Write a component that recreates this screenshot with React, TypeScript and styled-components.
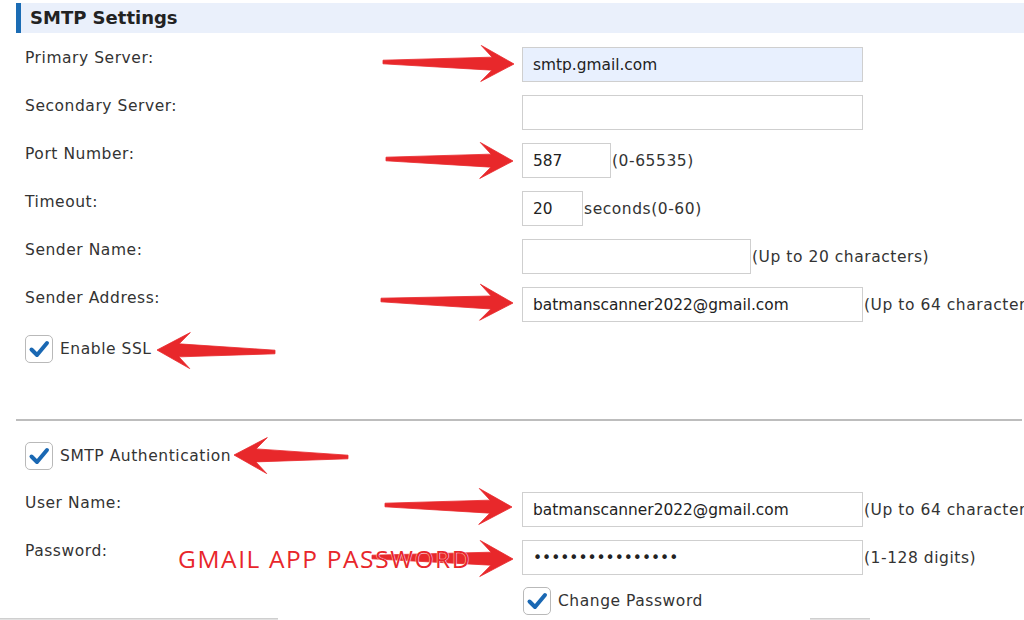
import React from "react";
import styled, { createGlobalStyle } from "styled-components";

const Global = createGlobalStyle`
  html, body { margin: 0; padding: 0; background: #ffffff; }
  body { font-family: "DejaVu Sans", Verdana, sans-serif; color: #333; }
`;

const Page = styled.div`
  position: relative;
  width: 1024px;
  height: 620px;
  overflow: hidden;
  padding-top: 3px;
  box-sizing: border-box;
`;

const SectionHeader = styled.h2`
  margin: 0 0 0 16px;
  height: 30px;
  line-height: 30px;
  padding-left: 9px;
  border-left: 5px solid #1b6cb4;
  background: #eaf0fb;
  font-size: 18px;
  font-weight: bold;
  color: #222;
`;

const Form = styled.div<{ $top: number }>`
  display: flex;
  flex-direction: column;
  gap: 13px;
  margin-top: ${(p) => p.$top}px;
  padding-left: 25px;
`;

const Row = styled.div<{ $shift?: number }>`
  display: flex;
  align-items: flex-start;
  white-space: nowrap;
  margin-top: ${(p) => p.$shift ?? 0}px;
`;

const Label = styled.div`
  width: 497px;
  flex: none;
  padding-top: 2px;
  font-size: 15.5px;
  letter-spacing: 0.55px;
  line-height: 18px;
  color: #333;
`;

const Field = styled.div`
  display: flex;
  align-items: center;
  height: 35px;
`;

const TextInput = styled.input<{ $w: number; $filled?: boolean }>`
  box-sizing: border-box;
  width: ${(p) => p.$w}px;
  height: 35px;
  margin: 0;
  padding: 0 10px;
  border: 1px solid #cfcfcf;
  border-radius: 0;
  background: ${(p) => (p.$filled ? "#e8f0fe" : "#ffffff")};
  font-family: "DejaVu Sans", Verdana, sans-serif;
  font-size: 15.4px;
  color: #222;
  outline: none;
`;

const Hint = styled.span`
  margin-left: 1px;
  font-size: 15.5px;
  letter-spacing: 0.55px;
  color: #333;
`;

const CheckRow = styled.label<{ $indent?: number; $shift?: number }>`
  display: flex;
  align-items: center;
  gap: 7px;
  margin-left: ${(p) => p.$indent ?? 0}px;
  margin-top: ${(p) => p.$shift ?? 0}px;
  font-size: 15.5px;
  letter-spacing: 0.55px;
  color: #333;
  white-space: nowrap;
`;

const Box = styled.span`
  box-sizing: border-box;
  width: 28px;
  height: 28px;
  border: 1.5px solid #b9b9b9;
  border-radius: 5px;
  background: #fff;
  display: flex;
  align-items: center;
  justify-content: center;
`;

const Divider = styled.hr`
  margin: 56px 2px 0 16px;
  border: none;
  border-top: 2px solid #bdbdbd;
  height: 0;
`;

const Footer = styled.div`
  display: flex;
  margin-top: 3px;
`;

const FooterBar = styled.div<{ $w: number; $ml: number }>`
  width: ${(p) => p.$w}px;
  margin-left: ${(p) => p.$ml}px;
  height: 4px;
  background: #e1e1e1;
  border-top: 1px solid #cfcfcf;
`;

const Overlay = styled.svg`
  position: absolute;
  left: 0;
  top: 0;
  pointer-events: none;
`;

const Annotation = styled.span`
  position: absolute;
  left: 178px;
  top: 544px;
  font-family: "Open Sans", "Liberation Sans", sans-serif;
  font-size: 24.5px;
  line-height: 30px;
  color: #e8262b;
  letter-spacing: 1.6px;
  text-shadow: 0 0 1px #fff, 0 0 1px #fff;
  white-space: nowrap;
`;

const Check = () => (
  <Box>
    <svg width="22" height="22" viewBox="0 0 22 22">
      <path
        d="M3.5 11.5 L9 17 L19 5"
        fill="none"
        stroke="#1a68b3"
        strokeWidth="4"
        strokeLinecap="round"
        strokeLinejoin="round"
      />
    </svg>
  </Box>
);

type ArrowDef = { x1: number; y1: number; x2: number; y2: number };

const arrows: ArrowDef[] = [
  { x1: 383, y1: 62, x2: 514, y2: 64 },
  { x1: 386, y1: 159, x2: 513, y2: 161 },
  { x1: 381, y1: 300, x2: 513, y2: 303 },
  { x1: 275, y1: 352, x2: 157, y2: 350 },
  { x1: 348, y1: 457, x2: 234, y2: 455 },
  { x1: 385, y1: 505, x2: 512, y2: 507 },
  { x1: 372, y1: 557, x2: 513, y2: 559 },
];

const Arrow = ({ x1, y1, x2, y2 }: ArrowDef) => {
  const L = Math.hypot(x2 - x1, y2 - y1);
  const a = (Math.atan2(y2 - y1, x2 - x1) * 180) / Math.PI;
  const d = `M0,-1.8 L${L - 22},-6.5 L${L - 33},-18 L${L},0 L${L - 33},18 L${L - 22},6.5 L0,1.8 Z`;
  return (
    <path
      d={d}
      fill="#e8282b"
      stroke="#e8282b"
      strokeWidth="0.8"
      strokeLinejoin="round"
      transform={`translate(${x1} ${y1}) rotate(${a})`}
    />
  );
};

export default function App() {
  return (
    <>
      <Global />
      <Page>
        <SectionHeader>SMTP Settings</SectionHeader>
        <Form $top={14}>
          <Row>
            <Label>Primary Server:</Label>
            <Field>
              <TextInput $w={341} $filled readOnly value="smtp.gmail.com" />
            </Field>
          </Row>
          <Row>
            <Label>Secondary Server:</Label>
            <Field>
              <TextInput $w={341} readOnly value="" />
            </Field>
          </Row>
          <Row>
            <Label>Port Number:</Label>
            <Field>
              <TextInput $w={89} readOnly value="587" />
              <Hint>(0-65535)</Hint>
            </Field>
          </Row>
          <Row>
            <Label>Timeout:</Label>
            <Field>
              <TextInput $w={61} readOnly value="20" />
              <Hint>seconds(0-60)</Hint>
            </Field>
          </Row>
          <Row>
            <Label>Sender Name:</Label>
            <Field>
              <TextInput $w={229} readOnly value="" />
              <Hint>(Up to 20 characters)</Hint>
            </Field>
          </Row>
          <Row>
            <Label>Sender Address:</Label>
            <Field>
              <TextInput $w={341} readOnly value="batmanscanner2022@gmail.com" />
              <Hint>(Up to 64 characters)</Hint>
            </Field>
          </Row>
          <CheckRow>
            <Check />
            Enable SSL
          </CheckRow>
        </Form>
        <Divider />
        <Form $top={21}>
          <CheckRow>
            <Check />
            SMTP Authentication
          </CheckRow>
          <Row $shift={9}>
            <Label>User Name:</Label>
            <Field>
              <TextInput $w={341} readOnly value="batmanscanner2022@gmail.com" />
              <Hint>(Up to 64 characters)</Hint>
            </Field>
          </Row>
          <Row>
            <Label>Password:</Label>
            <Field>
              <TextInput $w={341} type="password" readOnly value="abcdefghijklmnop" />
              <Hint>(1-128 digits)</Hint>
            </Field>
          </Row>
          <CheckRow $indent={498} $shift={-1}>
            <Check />
            Change Password
          </CheckRow>
        </Form>
        <Footer>
          <FooterBar $w={278} $ml={0} />
          <FooterBar $w={60} $ml={532} />
        </Footer>
        <Overlay width="1024" height="620" viewBox="0 0 1024 620">
          {arrows.map((a, i) => (
            <Arrow key={i} {...a} />
          ))}
        </Overlay>
        <Annotation>GMAIL APP PASSWORD</Annotation>
      </Page>
    </>
  );
}
